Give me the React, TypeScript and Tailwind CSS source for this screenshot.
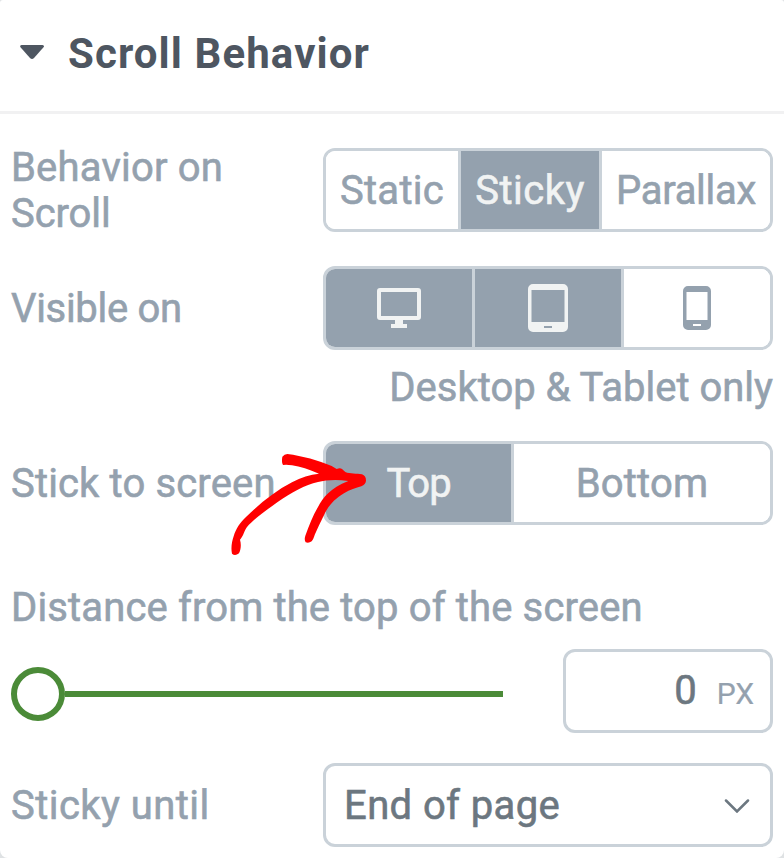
import type { ReactNode } from 'react'

type SegmentProps = {
  active?: boolean
  className: string
  children: ReactNode
}

const Segment = ({ active = false, className, children }: SegmentProps) => (
  <button
    type="button"
    className={`flex h-full items-center justify-center whitespace-nowrap ${className} ${
      active ? 'bg-[#94a1ae] text-[#f1f3f3]' : 'bg-white text-[#94a1ae]'
    }`}
  >
    {children}
  </button>
)

const SegmentGroup = ({ children }: { children: ReactNode }) => (
  <div className="flex h-[84px] w-[450px] shrink-0 divide-x-[3px] divide-[#cad2d9] overflow-hidden rounded-xl border-[3px] border-[#cad2d9]">
    {children}
  </div>
)

const Row = ({ label, children }: { label: ReactNode; children: ReactNode }) => (
  <div className="flex h-[84px] items-center justify-between">
    <div className="pt-px leading-[46px] whitespace-nowrap">{label}</div>
    {children}
  </div>
)

const DesktopIcon = () => (
  <svg width="44" height="40" viewBox="0 0 44 40" fill="currentColor">
    <path
      fillRule="evenodd"
      d="M3 0h38a3 3 0 0 1 3 3v26a3 3 0 0 1-3 3H26v4h4v4H14v-4h4v-4H3a3 3 0 0 1-3-3V3a3 3 0 0 1 3-3ZM4 4v24h36V4Z"
    />
  </svg>
)

const TabletIcon = () => (
  <svg width="40" height="48" viewBox="0 0 40 48" fill="currentColor">
    <path
      fillRule="evenodd"
      d="M5 0h30a5 5 0 0 1 5 5v38a5 5 0 0 1-5 5H5a5 5 0 0 1-5-5V5a5 5 0 0 1 5-5ZM3.5 6v32h33V6ZM16 42v2h8v-2Z"
    />
  </svg>
)

const PhoneIcon = () => (
  <svg width="28" height="44" viewBox="0 0 28 44" fill="currentColor">
    <path
      fillRule="evenodd"
      d="M5 0h18a5 5 0 0 1 5 5v34a5 5 0 0 1-5 5H5a5 5 0 0 1-5-5V5a5 5 0 0 1 5-5ZM3.5 6v28h21V6ZM10 38v2h8v-2Z"
    />
  </svg>
)

const ArrowMark = () => (
  <svg
    className="pointer-events-none absolute top-[430px] left-[220px]"
    width="160"
    height="130"
    viewBox="0 0 480 390"
    fill="#ff0000"
  >
    <path d="M202 72C248 78 294 91 335 108L350 117Q360 112 366 117L376 126C390 132 410 130 426 133Q438 137 438 152Q437 163 424 169C408 174 390 178 372 190C347 205 330 222 316 247C306 268 295 291 288 306C283 315 282 326 275 334Q266 341 257 337Q252 330 256 317C268 285 280 254 294 231C309 203 330 175 385 153C350 148 318 150 294 156C255 165 215 187 173 216C141 239 102 266 81 291C72 303 72 315 60 329C64 342 63 358 57 370Q45 379 36 371C32 353 36 334 41 319C48 296 59 279 78 261C119 221 164 184 216 157C244 142 270 133 297 131C267 119 241 109 216 106Q199 103 189 105Q184 98 187 80Q193 72 202 72Z" />
  </svg>
)

function App() {
  return (
    <div className="h-[858px] w-[784px] bg-[#dfe2e4]">
      <div className="relative h-full overflow-hidden rounded-t-[3px] rounded-b-[8px] bg-white font-[Roboto,sans-serif] text-[40px] text-[#94a1ae] [-webkit-text-stroke:0.6px]">
        <header className="flex h-[114px] items-center border-b-[3px] border-[#f1f1f2] pl-5 text-[#4e5661]">
          <svg className="mb-[7px]" width="24" height="14" viewBox="0 0 24 14" fill="currentColor">
            <path d="M1.5 0h21q2.500.5.8 2.500L14 13q-2 1.800-4 0L.7 2.500Q-.8.5 1.500 0Z" />
          </svg>
          <h2 className="ml-6 pb-1 text-[42px] leading-[48px] font-bold tracking-[1.1px] whitespace-nowrap [-webkit-text-stroke:0]">
            Scroll Behavior
          </h2>
        </header>

        <section className="flex flex-col pt-[34px] pr-[11px] pl-[11px]">
          <Row
            label={
              <>
                <span className="tracking-[0.2px]">Behavior on</span>
                <br />
                <span className="tracking-[-0.1px]">Scroll</span>
              </>
            }
          >
            <SegmentGroup>
              <Segment className="w-[135px] pt-[2px] tracking-[0.3px]">Static</Segment>
              <Segment active className="w-[141px] pt-[2px] tracking-[0.5px]">Sticky</Segment>
              <Segment className="flex-1 pt-[2px] tracking-[-0.3px]">Parallax</Segment>
            </SegmentGroup>
          </Row>

          <div className="mt-[34px]">
            <Row label={<span className="tracking-[-0.3px]">Visible on</span>}>
              <SegmentGroup>
                <Segment active className="w-[149px]">
                  <DesktopIcon />
                </Segment>
                <Segment active className="w-[149px]">
                  <TabletIcon />
                </Segment>
                <Segment className="flex-1">
                  <PhoneIcon />
                </Segment>
              </SegmentGroup>
            </Row>
            <p className="mt-[15px] text-right leading-[46px]">Desktop &amp; Tablet only</p>
          </div>

          <div className="mt-[30px]">
            <Row label={<span className="tracking-[0.15px]">Stick to screen</span>}>
              <SegmentGroup>
                <Segment active className="w-[188px] pt-[2px] tracking-[-1px]">Top</Segment>
                <Segment className="flex-1 pt-[2px] tracking-[0.2px]">Bottom</Segment>
              </SegmentGroup>
            </Row>
          </div>

          <p className="mt-[60px] leading-[46px] tracking-[0.14px]">Distance from the top of the screen</p>
          <div className="mt-[18px] flex h-[84px] items-center justify-between">
            <div className="mt-[6px] flex w-[492px] items-center">
              <span className="h-[54px] w-[54px] shrink-0 rounded-full border-[6px] border-[#4b8b38] bg-white" />
              <span className="h-[6px] flex-1 bg-[#4b8b38]" />
            </div>
            <div className="flex h-[84px] w-[210px] items-baseline justify-end rounded-xl border-[3px] border-[#cad2d9] pt-4 pr-4 leading-[46px]">
              <span className="text-[#6c7780]">0</span>
              <span className="ml-5 text-[30px] [-webkit-text-stroke:0.2px]">PX</span>
            </div>
          </div>

          <div className="mt-[30px]">
            <Row label={<span className="tracking-[0.45px]">Sticky until</span>}>
              <div className="flex h-[84px] w-[450px] items-center justify-between rounded-xl border-[3px] border-[#cad2d9] pr-5 pl-[18px] text-[#6c7780]">
                <span className="pt-[2px] tracking-[0.4px]">End of page</span>
                <svg className="mt-px" width="26" height="14" viewBox="0 0 26 14" fill="none" stroke="currentColor" strokeWidth="2.5" strokeLinecap="round">
                  <path d="m2 1.500 11 11 11-11" />
                </svg>
              </div>
            </Row>
          </div>
        </section>

        <ArrowMark />
      </div>
    </div>
  )
}

export default App
